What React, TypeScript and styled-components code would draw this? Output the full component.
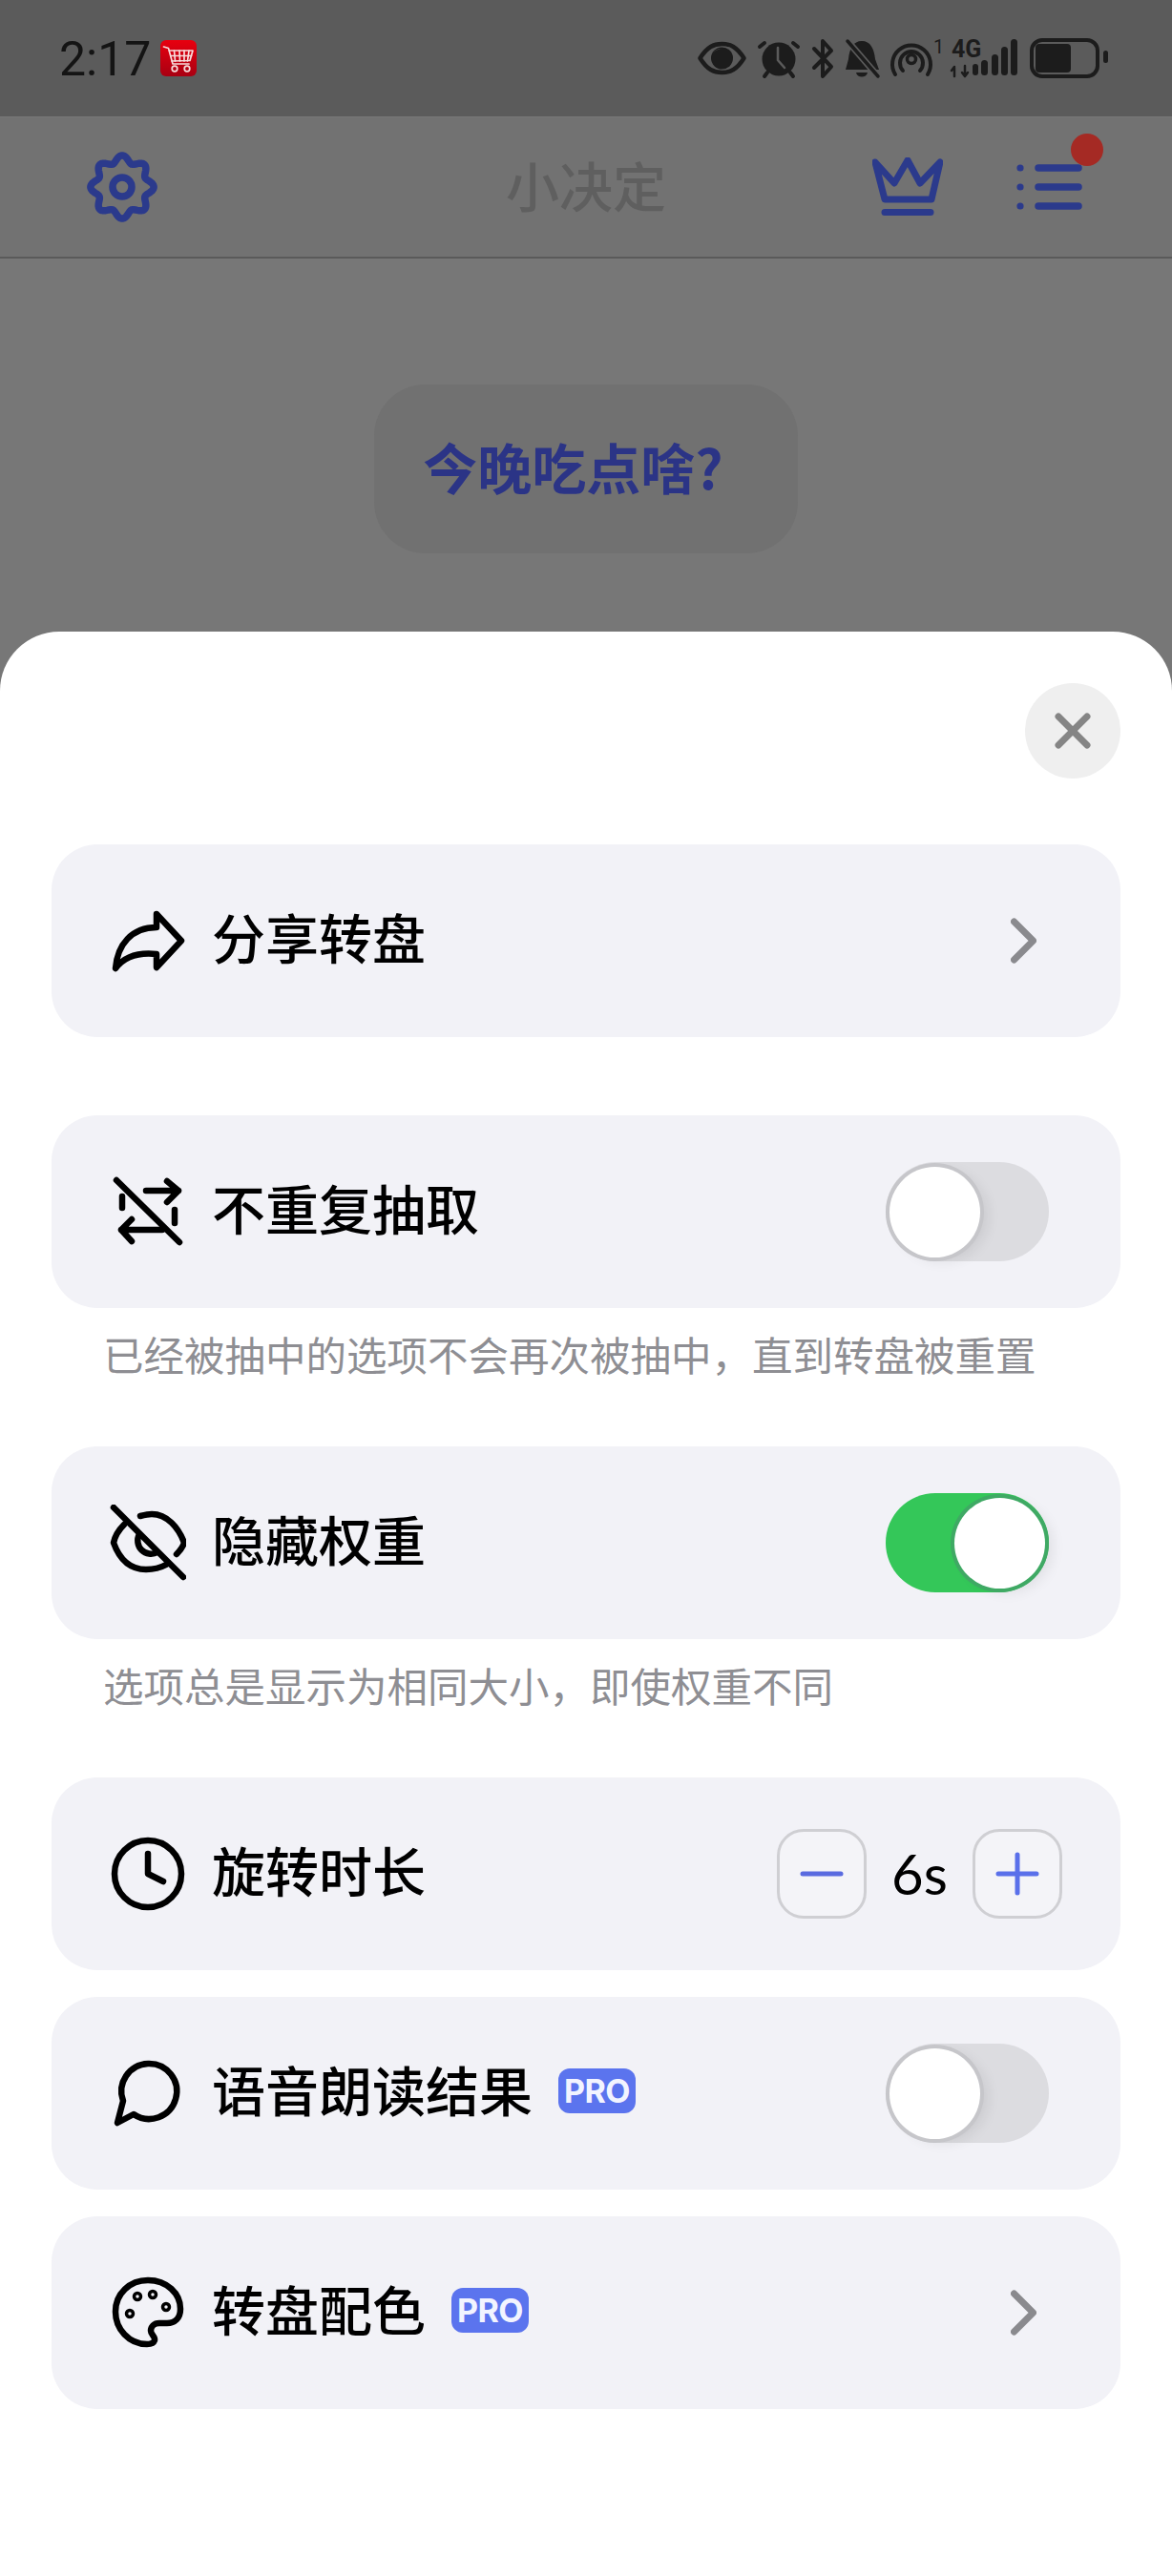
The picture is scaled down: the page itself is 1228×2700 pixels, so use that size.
import React from "react";
import styled, { createGlobalStyle } from "styled-components";

const CJK = `"Noto Sans CJK SC", "Noto Sans", sans-serif`;

const Global = createGlobalStyle`
  html, body { margin: 0; padding: 0; background: #fff; }
  * { box-sizing: border-box; }
`;

const Screen = styled.div`
  width: 1228px;
  height: 2700px;
  display: flex;
  flex-direction: column;
  overflow: hidden;
  background: #777;
  font-family: ${CJK};
`;

const StatusBar = styled.div`
  height: 122px;
  flex: none;
  display: flex;
  align-items: flex-start;
  padding: 38px 67px 0 62px;
  background: #5b5b5b;
  color: #141414;
`;

const Time = styled.span`
  font: 400 50px/48px Roboto, sans-serif;
  margin-right: 10px;
`;

const CartBadge = styled.svg`
  width: 38px;
  height: 38px;
  margin-top: 4px;
`;

const StatusIcons = styled.svg`
  width: 431px;
  height: 48px;
  margin-left: auto;
  margin-right: -0.5px;
`;

const Header = styled.header`
  height: 149px;
  flex: none;
  display: grid;
  grid-template-columns: 1fr auto 1fr;
  align-items: center;
  padding: 0 72px;
  background: #727272;
  border-top: 1px solid #777;
  border-bottom: 2px solid #5a5a5a;
`;

const GearSlot = styled.div`
  display: flex;
  padding-left: 19px;
`;

const Title = styled.h1`
  margin: -6px 0 0;
  font: 500 56px/70px ${CJK};
  color: #5f5f5f;
`;

const HeaderActions = styled.div`
  display: flex;
  justify-content: flex-end;
  align-items: center;
  gap: 76px;
`;

const Backdrop = styled.div`
  height: 391px;
  flex: none;
  display: flex;
  justify-content: center;
  padding-top: 132px;
`;

const QuestionPill = styled.div`
  width: 444px;
  height: 177px;
  padding: 0 27px 7px 0;
  display: flex;
  align-items: center;
  justify-content: center;
  border-radius: 54px;
  background: #717171;
  color: #2b3486;
  font: 700 57px/70px ${CJK};
`;

const Sheet = styled.section`
  flex: 1;
  background: #fff;
  border-radius: 62px 62px 0 0;
  padding: 54px 54px 0;
  display: flex;
  flex-direction: column;
`;

const CloseButton = styled.div`
  width: 100px;
  height: 100px;
  flex: none;
  align-self: flex-end;
  display: flex;
  align-items: center;
  justify-content: center;
  border-radius: 50%;
  background: #efefef;
  margin-bottom: 69px;
`;

const Row = styled.div<{ $after?: number }>`
  height: 202px;
  flex: none;
  display: flex;
  align-items: center;
  padding: 0 61px;
  border-radius: 48px;
  background: #f2f2f7;
  margin-bottom: ${(p) => p.$after ?? 28}px;
`;

const RowIcon = styled.svg`
  width: 80px;
  height: 80px;
  flex: none;
  margin-right: 27px;
  fill: none;
  stroke: #000;
  stroke-width: 6.5;
  stroke-linecap: round;
  stroke-linejoin: round;
`;

const Label = styled.span`
  font: 500 56px/70px ${CJK};
  color: #000;
  white-space: nowrap;
  margin-top: -10px;
`;

const ProBadge = styled.span`
  width: 81px;
  height: 47px;
  margin-left: 27px;
  margin-top: -6px;
  display: flex;
  align-items: center;
  justify-content: center;
  border-radius: 12px;
  background: #5b74ee;
  color: #f2f4ff;
  font: 700 34px/47px Inter, sans-serif;
  letter-spacing: -0.5px;
`;

const Trailing = styled.div<{ $inset: number }>`
  margin-left: auto;
  margin-right: ${(p) => p.$inset}px;
  display: flex;
  align-items: center;
`;

const Track = styled.div<{ $on?: boolean }>`
  width: 171px;
  height: 104px;
  display: flex;
  align-items: center;
  justify-content: ${(p) => (p.$on ? "flex-end" : "flex-start")};
  padding: 0 4px;
  border-radius: 52px;
  background: ${(p) => (p.$on ? "#34c759" : "#dcdce0")};
`;

const Knob = styled.div<{ $on?: boolean }>`
  width: 95px;
  height: 95px;
  border-radius: 50%;
  background: #fff;
  box-shadow: 0 0 0 ${(p) => (p.$on ? "4px #3fa964" : "4px #c6c6ca")},
    8px 4px 14px rgba(0, 0, 0, 0.08);
`;

const Stepper = styled.div`
  display: flex;
  align-items: center;
`;

const StepButton = styled.div`
  width: 94px;
  height: 94px;
  display: flex;
  align-items: center;
  justify-content: center;
  border: 3px solid #cfcfd3;
  border-radius: 28px;
  background: #f4f4f8;
`;

const StepValue = styled.span`
  width: 111px;
  text-align: center;
  font: 400 58px/70px Lato, sans-serif;
  color: #000;
`;

const Hint = styled.p<{ $after: number }>`
  margin: 18px 0 ${(p) => p.$after}px;
  padding-left: 54px;
  font: 400 42.5px/60px ${CJK};
  color: #8e8e93;
  white-space: nowrap;
`;

const gearPath = (() => {
  const pts: string[] = [];
  for (let i = 0; i < 240; i++) {
    const t = (i / 240) * Math.PI * 2;
    const r = 29.5 + 3.6 * Math.cos(8 * t);
    const x = 37 + r * Math.sin(t);
    const y = 37 - r * Math.cos(t);
    pts.push(`${x.toFixed(2)} ${y.toFixed(2)}`);
  }
  return `M${pts.join("L")}Z`;
})();

const Gear = () => (
  <svg width="74" height="74" viewBox="0 0 74 74" fill="none" stroke="#2b3a8c" strokeWidth="7.5" strokeLinejoin="round">
    <path d={gearPath} />
    <ellipse cx="37" cy="37" rx="10" ry="10" />
  </svg>
);

const Crown = () => (
  <svg width="74" height="62" viewBox="0 0 74 62" fill="none" stroke="#2b3a8c" strokeWidth="7" strokeLinejoin="round" strokeLinecap="round">
    <path d="M3 5 L23 27 L37 3 L50 27 L71 5 L62 44 H13 Z" />
    <path d="M13 57.5 H61" />
  </svg>
);

const Menu = () => (
  <svg width="92" height="116" viewBox="0 0 92 116" fill="none">
    <g fill="#2b3a8c">
      <circle cx="5" cy="38" r="3.6" />
      <circle cx="5" cy="58" r="3.6" />
      <circle cx="5" cy="78" r="3.6" />
    </g>
    <g stroke="#2b3a8c" strokeWidth="7.5" strokeLinecap="round">
      <path d="M24 38 H66" />
      <path d="M24 58 H66" />
      <path d="M24 78 H66" />
    </g>
    <ellipse cx="75" cy="19" rx="17" ry="17" fill="#a52a24" />
  </svg>
);

const Chevron = () => (
  <svg width="27" height="48" viewBox="0 0 27 48" fill="none" stroke="#8a8a8e" strokeWidth="7" strokeLinecap="round" strokeLinejoin="round">
    <path d="M3.5 4 L23.5 24 L3.5 44" />
  </svg>
);

const Toggle = ({ on }: { on?: boolean }) => (
  <Trailing $inset={14}>
    <Track $on={on}>
      <Knob $on={on} />
    </Track>
  </Trailing>
);

const Pro = () => <ProBadge>PRO</ProBadge>;

export default function App() {
  return (
    <Screen>
      <Global />
      <StatusBar>
        <Time>2:17</Time>
        <CartBadge viewBox="0 0 38 38">
          <defs>
            <linearGradient id="cart" x1="0" y1="0" x2="0" y2="1">
              <stop offset="0" stopColor="#e8000f" />
              <stop offset="1" stopColor="#a80012" />
            </linearGradient>
          </defs>
          <rect width="38" height="38" rx="6" fill="url(#cart)" />
          <g fill="none" stroke="#f7dcdc" strokeWidth="1.7" strokeLinecap="round" strokeLinejoin="round">
            <path d="M3.5 7 L8.5 8.5 L13 25 H30" />
            <path d="M9.5 11 H34 L31 21.5 L12 22" />
            <path d="M14.5 11 L15.5 22 M20 11 L20.5 22 M25 11 L25 22 M30 11 L28.5 22" />
            <path d="M11 16.5 H32.5" />
            <circle cx="15" cy="30" r="2.8" />
            <circle cx="28" cy="30" r="2.8" />
          </g>
        </CartBadge>
        <StatusIcons viewBox="0 0 431 48">
          <g fill="none" stroke="#1c1c1c" strokeLinecap="round" strokeLinejoin="round">
            <path d="M2.5 23 C10 11 17 8 25.5 8 C34 8 41 11 48.5 23 C41 35 34 38 25.5 38 C17 38 10 35 2.5 23 Z" strokeWidth="4.5" />
            <path d="M70 7 L65 11 M100 7 L105 11 M73 38 L70 42 M97 38 L100 42" strokeWidth="4" />
            <path d="M122 13 L140 32 L131 42 V5 L140 15 L122 33" strokeWidth="4" />
            <path d="M207 40 A20 20 0 1 1 241 40 M215 36 A12 12 0 1 1 233 36" strokeWidth="4" />
            <path d="M271 33 V42 M268 36 L271 32 M282 31 V41 M279 38 L282 42 M285 38 L282 42" strokeWidth="2.5" transform="translate(-2 0)" />
            <rect x="350" y="4" width="69" height="38" rx="11" strokeWidth="4" />
          </g>
          <circle cx="25.5" cy="23" r="11.5" fill="#1c1c1c" />
          <path d="M16 18 A9 9 0 0 1 25 14 A7 7 0 0 0 16 18 Z" fill="#6a6a6a" />
          <circle cx="85" cy="24" r="17.5" fill="#1c1c1c" />
          <path d="M84 12 V25 L91 33" fill="none" stroke="#5b5b5b" strokeWidth="2.5" strokeLinecap="round" />
          <path d="M172 5 C181 5 185 13 186 24 L190 35 H155 L158 24 C159 13 163 5 172 5 Z M166 38 H178 C177 44 167 44 166 38 Z" fill="#1c1c1c" />
          <path d="M158 6 L188 41" stroke="#5b5b5b" strokeWidth="7" />
          <path d="M157 5 L189 42" stroke="#1c1c1c" strokeWidth="3.5" strokeLinecap="round" />
          <circle cx="224" cy="24" r="4.5" fill="none" stroke="#1c1c1c" strokeWidth="3.5" />
          <text x="247" y="18" fontFamily="'Liberation Sans Narrow', Roboto, sans-serif" fontSize="20" fill="#1c1c1c">1</text>
          <text x="266" y="22" fontFamily="'Liberation Sans Narrow', Roboto, sans-serif" fontSize="25" fontWeight="700" fill="#1c1c1c">4G</text>
          <g fill="#1c1c1c">
            <rect x="288" y="29" width="6" height="12" rx="3" />
            <rect x="297" y="25" width="7" height="16" rx="3.5" />
            <rect x="308" y="19" width="7" height="22" rx="3.5" />
            <rect x="318" y="11" width="7" height="30" rx="3.5" />
            <rect x="328" y="3" width="7" height="38" rx="3.5" />
            <rect x="354" y="8" width="37" height="30" rx="4" />
            <rect x="425" y="15" width="5" height="13" rx="2.5" />
          </g>
        </StatusIcons>
      </StatusBar>

      <Header>
        <GearSlot>
          <Gear />
        </GearSlot>
        <Title>小决定</Title>
        <HeaderActions>
          <Crown />
          <Menu />
        </HeaderActions>
      </Header>

      <Backdrop>
        <QuestionPill>今晚吃点啥?</QuestionPill>
      </Backdrop>

      <Sheet>
        <CloseButton>
          <svg width="38" height="38" viewBox="0 0 38 38" fill="none" stroke="#858585" strokeWidth="7" strokeLinecap="round">
            <path d="M4 4 L34 34 M34 4 L4 34" />
          </svg>
        </CloseButton>

        <Row $after={82}>
          <RowIcon viewBox="0 0 80 80">
            <path d="M49 12 L75 40 L49 68 V54 C30 52 15 57 6 69 C8 44 23 26 49 26 Z" />
          </RowIcon>
          <Label>分享转盘</Label>
          <Trailing $inset={27}>
            <Chevron />
          </Trailing>
        </Row>

        <Row $after={0}>
          <RowIcon viewBox="0 0 80 80">
            <path d="M7 7 L73 72" />
            <path d="M38 18 H72 M60 8 L72 18 L60 30" />
            <path d="M13 36 V24" />
            <path d="M68 38 V52" />
            <path d="M55 59 H12 M23 48 L12 59 L23 71" />
          </RowIcon>
          <Label>不重复抽取</Label>
          <Toggle />
        </Row>
        <Hint $after={67}>已经被抽中的选项不会再次被抽中，直到转盘被重置</Hint>

        <Row $after={0}>
          <RowIcon viewBox="0 0 80 80">
            <path d="M4 3 L77 76" />
            <path d="M15 21 Q6 30 4 40 Q14 68 38 68 Q50 68 59 63" />
            <path d="M32 12 Q40 10 44 10 C60 10 72 24 78 40 Q76 46 70 52" />
            <path d="M31 31 A14 14 0 0 0 50 50" />
          </RowIcon>
          <Label>隐藏权重</Label>
          <Toggle on />
        </Row>
        <Hint $after={67}>选项总是显示为相同大小，即使权重不同</Hint>

        <Row>
          <RowIcon viewBox="0 0 80 80">
            <circle cx="40" cy="40" r="35" />
            <path d="M40 19 V40 L56 48" />
          </RowIcon>
          <Label>旋转时长</Label>
          <Trailing $inset={0}>
            <Stepper>
              <StepButton>
                <svg width="46" height="8" viewBox="0 0 46 8" fill="none" stroke="#5a6be0" strokeWidth="5" strokeLinecap="round">
                  <path d="M3 4 H43" />
                </svg>
              </StepButton>
              <StepValue>6s</StepValue>
              <StepButton>
                <svg width="46" height="46" viewBox="0 0 46 46" fill="none" stroke="#5a70ea" strokeWidth="5" strokeLinecap="round">
                  <path d="M3 23 H43 M23 3 V43" />
                </svg>
              </StepButton>
            </Stepper>
          </Trailing>
        </Row>

        <Row>
          <RowIcon viewBox="0 0 80 80">
            <path d="M14 48 A29 29 0 1 1 25 62 L8 71 Z" />
          </RowIcon>
          <Label>语音朗读结果</Label>
          <Pro />
          <Toggle />
        </Row>

        <Row>
          <RowIcon viewBox="0 0 80 80">
            <path d="M39 73 C20 73 6 57 6 39 C6 20 21 6 40 6 C60 6 74 20 74 36 C74 46 68 51 60 51 H52 C46 51 43 55 43 59 C43 63 48 65 47 69 C46 72 42 73 39 73 Z" />
            <g strokeWidth="3.5">
              <circle cx="21" cy="41" r="3.5" />
              <circle cx="29" cy="23" r="3.5" />
              <circle cx="45" cy="21" r="3.5" />
              <circle cx="59" cy="34" r="3.5" />
            </g>
          </RowIcon>
          <Label>转盘配色</Label>
          <Pro />
          <Trailing $inset={27}>
            <Chevron />
          </Trailing>
        </Row>
      </Sheet>
    </Screen>
  );
}
